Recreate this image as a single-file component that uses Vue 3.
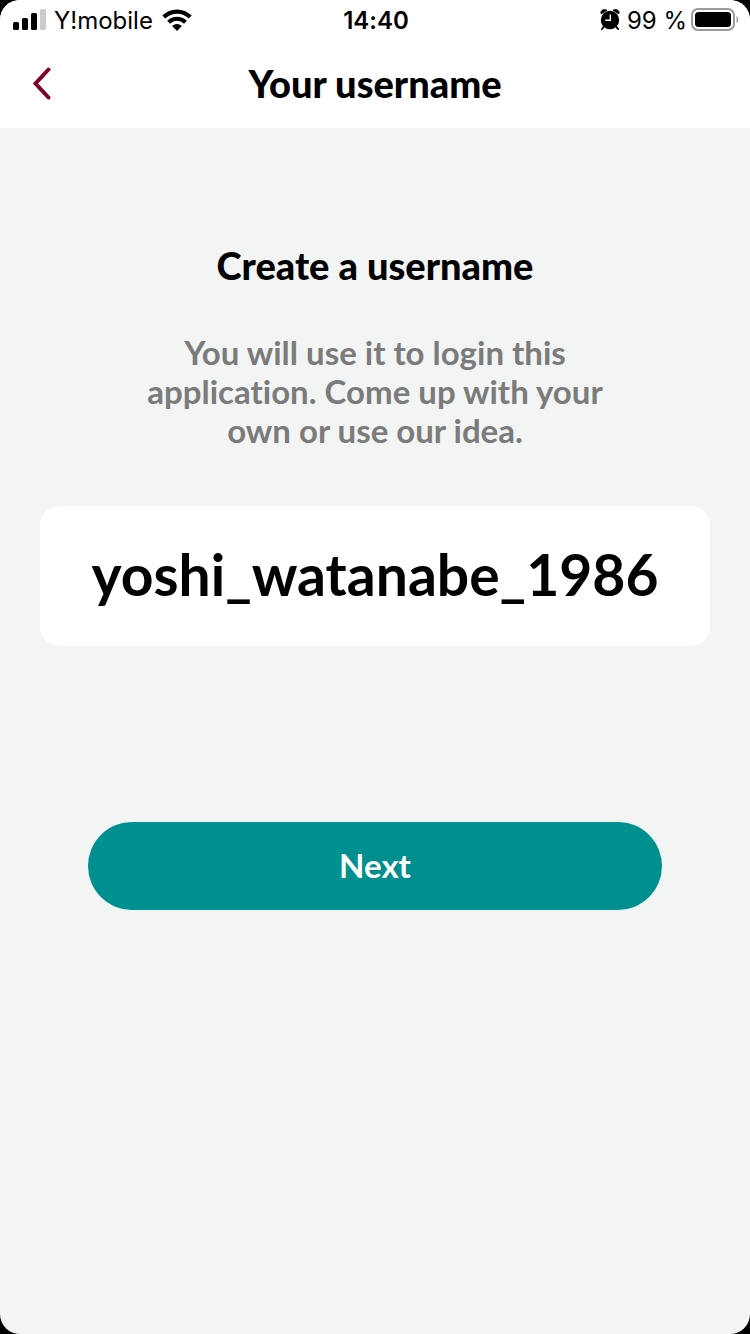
<script setup>
import { ref } from 'vue'

const username = ref('yoshi_watanabe_1986')
</script>

<template>
  <div class="screen">
    <div class="status">
      <div class="status-side">
        <svg class="signal" width="34" height="22" viewBox="0 0 34 22" aria-hidden="true">
          <rect x="0" y="13" width="6" height="8" rx="1.5" />
          <rect x="9" y="9" width="6" height="12" rx="1.5" />
          <rect x="18" y="4" width="6" height="17" rx="1.5" />
          <rect x="27" y="0" width="6" height="21" rx="1.5" fill="#cccccc" />
        </svg>
        <span class="carrier">Y!mobile</span>
        <svg class="wifi" width="30" height="22" viewBox="0 0 30 22" aria-hidden="true">
          <path d="M1.800 8a18.800 18.800 0 0 1 26.400 0" fill="none" stroke="#000" stroke-width="4.200" />
          <path d="M6.600 13.200a12 12 0 0 1 16.800 0" fill="none" stroke="#000" stroke-width="4" />
          <path d="M15 22l-4.900-5a7 7 0 0 1 9.800 0z" />
        </svg>
      </div>
      <time class="time">14:40</time>
      <div class="status-side status-end">
        <svg class="alarm" width="20" height="22" viewBox="0 0 20 22" aria-hidden="true">
          <circle cx="10" cy="11" r="9.200" />
          <path d="M1.200 4.800C.2 2.500 2.200.3 5.200.7L7 1.200zM18.800 4.800C19.800 2.500 17.800.3 14.800.7L13 1.200z" stroke="#000" stroke-width="1" stroke-linejoin="round" />
          <path d="M4 17.500l-2 2.500M16 17.500l2 2.500" stroke="#000" stroke-width="2" stroke-linecap="round" />
          <path d="M10.300 5.500v5.800H5.300" fill="none" stroke="#fff" stroke-width="1.400" />
        </svg>
        <span class="charge">99 %</span>
        <svg class="battery" width="48" height="24" viewBox="0 0 48 24" aria-hidden="true">
          <rect x="1" y="1" width="42" height="21" rx="6" fill="none" stroke="#9b9b9b" stroke-width="2" />
          <rect x="4" y="4" width="36" height="15" rx="3.500" />
          <path d="M45.500 8c2.300 1 2.300 6 0 7z" fill="#9b9b9b" />
        </svg>
      </div>
    </div>

    <header class="header">
      <button class="back" type="button" aria-label="Back">
        <svg width="20" height="34" viewBox="0 0 20 34" aria-hidden="true">
          <path d="M16.500 2.500L3.500 16.500L16.500 30.500" fill="none" stroke="#80002b" stroke-width="4" stroke-linecap="round" />
        </svg>
      </button>
      <h1 class="title">Your username</h1>
    </header>

    <main class="content">
      <h2 class="heading"><label for="username">Create a username</label></h2>
      <p class="hint">You will use it to login this application. Come up with your own or use our idea.</p>
      <input id="username" v-model="username" class="field" type="text" autocomplete="username" spellcheck="false" />
      <button class="next" type="button">Next</button>
    </main>
  </div>
</template>

<style>
body {
  background: #000;
}
</style>

<style scoped>
.screen {
  min-height: 100vh;
  display: flex;
  flex-direction: column;
  overflow: hidden;
  border-radius: 20px;
  background: #f3f5f4;
  color: #000;
  font-family: Lato, "Liberation Sans", sans-serif;
  font-variant-ligatures: none;
}

.status {
  display: grid;
  grid-template-columns: 1fr auto 1fr;
  align-items: center;
  height: 40px;
  padding: 0 11px 0 13px;
  background: #fff;
  font-family: Inter, "Liberation Sans", sans-serif;
  font-size: 24px;
  line-height: 32px;
}

.status-side {
  display: flex;
  align-items: center;
}

.status-end {
  justify-content: flex-end;
}

.carrier,
.time,
.charge {
  padding-top: 2px;
}

.carrier {
  margin: 0 9px 0 7px;
}

.time {
  font-weight: 600;
}

.charge {
  margin: 0 4px 0 7px;
}

.header {
  display: grid;
  grid-template-columns: 84px 1fr 84px;
  align-items: center;
  height: 88px;
  background: #fff;
}

.back {
  display: grid;
  place-items: center;
  height: 88px;
  padding: 0;
  border: 0;
  background: none;
}

.title,
.heading {
  margin: 0;
  padding-bottom: 2px;
  font-size: 38px;
  font-weight: 900;
  line-height: 42px;
  text-align: center;
}

.content {
  display: flex;
  flex-direction: column;
  align-items: center;
  padding: 116px 40px 40px;
}

.hint {
  max-width: 500px;
  margin: 45px 0 56px;
  color: #7b7b7b;
  font-size: 33px;
  font-weight: 700;
  line-height: 39px;
  text-align: center;
}

.field {
  box-sizing: border-box;
  width: 100%;
  height: 140px;
  padding: 0 20px 4px;
  border: 0;
  border-radius: 20px;
  outline: 0;
  background: #fff;
  color: #000;
  font-family: inherit;
  font-size: 57px;
  font-weight: 700;
  text-align: center;
}

.next {
  align-self: stretch;
  height: 88px;
  margin: 176px 48px 0;
  padding: 0 0 2px;
  border: 0;
  border-radius: 44px;
  background: #008f8f;
  color: #fff;
  font-family: inherit;
  font-size: 33px;
  font-weight: 700;
}
</style>
